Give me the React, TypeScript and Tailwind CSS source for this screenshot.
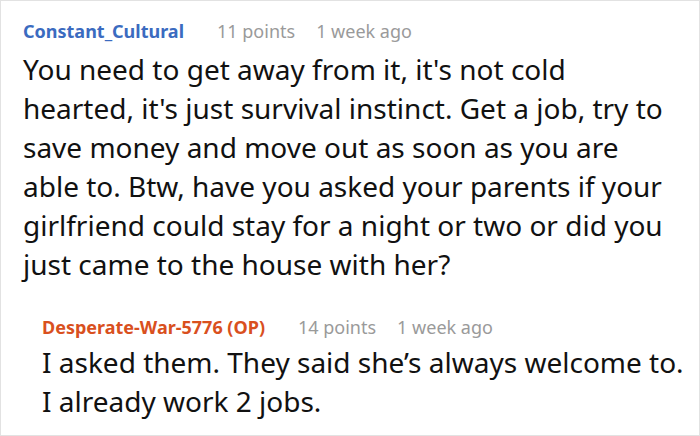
import React from "react";

export default function App() {
  return (
    <div
      className="w-[700px] h-[436px] bg-white border border-[#e2e2e2] overflow-hidden"
      style={{ fontFamily: '"Noto Sans", "Open Sans", sans-serif' }}
    >
      <div className="pl-[22px] pt-[16px] pr-4">
        <div className="flex items-baseline text-[18px] leading-[28px]">
          <span className="font-bold text-[#3b6bc0]">Constant_Cultural</span>
          <span className="ml-[33px] text-[#9a9a9a]">11 points</span>
          <span className="ml-[21px] text-[#9a9a9a]">1 week ago</span>
        </div>
        <p className="mt-[5px] text-[28px] leading-[39px] text-[#111] w-[645px]">
          You need to get away from it, it's not cold hearted, it's just survival instinct. Get a job, try to save money and move out as soon as you are able to. Btw, have you asked your parents if your girlfriend could stay for a night or two or did you just came to the house with her?
        </p>
        <div className="mt-[29px] flex">
          <div className="w-[2px] bg-[#e6e6e6] mt-[12px] mb-[4px]" />
          <div className="pl-[19px]">
            <div className="flex items-baseline text-[18px] leading-[28px]">
              <span className="font-bold text-[#d9501e]">Desperate-War-5776 (OP)</span>
              <span className="ml-[33px] text-[#9a9a9a]">14 points</span>
              <span className="ml-[21px] text-[#9a9a9a]">1 week ago</span>
            </div>
            <p className="mt-[2px] text-[28px] leading-[39px] text-[#111] whitespace-nowrap">
              I asked them. They said she’s always welcome to.
              <br />
              I already work 2 jobs.
            </p>
          </div>
        </div>
      </div>
    </div>
  );
}
